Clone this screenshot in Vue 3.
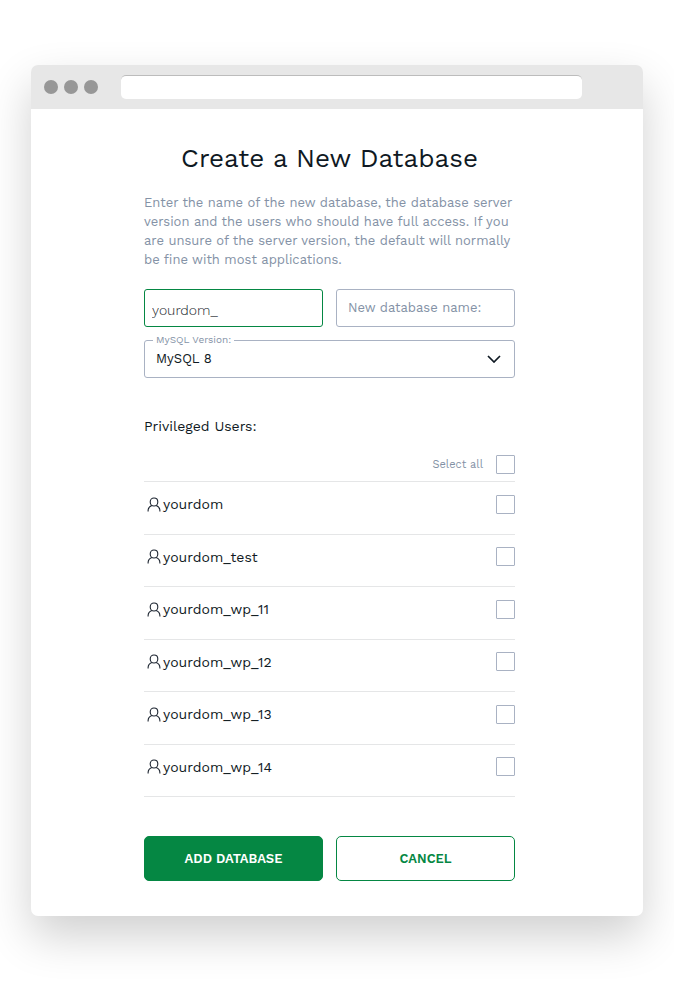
<script setup>
import { ref, computed } from 'vue'

const users = ['yourdom', 'yourdom_test', 'yourdom_wp_11', 'yourdom_wp_12', 'yourdom_wp_13', 'yourdom_wp_14']

const prefix = ref('yourdom_')
const name = ref('')
const version = ref('8')
const selected = ref([])

const allSelected = computed({
    get: () => selected.value.length === users.length,
    set: (value) => {
        selected.value = value ? [...users] : []
    },
})

function reset() {
    name.value = ''
    selected.value = []
}
</script>

<template>
    <main class="window">
        <header class="toolbar">
            <span class="dot"></span>
            <span class="dot"></span>
            <span class="dot"></span>
            <div class="address"></div>
        </header>

        <form class="content" @submit.prevent>
            <h1 class="title">Create a New Database</h1>
            <p class="intro">
                Enter the name of the new database, the database server version and the users who should have
                full access. If you are unsure of the server version, the default will normally be fine with
                most applications.
            </p>

            <div class="pair">
                <input v-model="prefix" class="field prefix" type="text" aria-label="Database prefix" readonly>
                <input v-model="name" class="field" type="text" aria-label="New database name" placeholder="New database name:">
            </div>

            <div class="version">
                <label class="version-label" for="version">MySQL Version:</label>
                <select id="version" v-model="version" class="field select">
                    <option value="8">MySQL 8</option>
                </select>
                <svg class="chevron" viewBox="0 0 14 8" aria-hidden="true">
                    <path d="M1 1l6 6 6-6" />
                </svg>
            </div>

            <h2 class="subtitle">Privileged Users:</h2>
            <div class="select-all">
                <label for="all">Select all</label>
                <input id="all" v-model="allSelected" class="check" type="checkbox">
            </div>

            <ul class="users">
                <li v-for="user in users" :key="user" class="user">
                    <svg class="icon" viewBox="0 0 14 15" aria-hidden="true">
                        <path d="M7 1c2.200 0 3.800 1.700 3.800 3.900S9.200 9 7 9 3.200 7.100 3.200 4.900 4.800 1 7 1z" />
                        <path d="M1.100 14.500v-.7c0-2.600 1.500-4.500 3.800-5.300M12.900 14.500v-.7c0-2.600-1.500-4.500-3.800-5.300" />
                    </svg>
                    <label class="user-name" :for="user">{{ user }}</label>
                    <input :id="user" v-model="selected" class="check" type="checkbox" :value="user">
                </li>
            </ul>

            <div class="pair">
                <button class="button primary" type="submit">ADD DATABASE</button>
                <button class="button" type="button" @click="reset">CANCEL</button>
            </div>
        </form>
    </main>
</template>

<style>
body {
    background: #fff;
}
</style>

<style scoped>
.window {
    margin: 65px 31px;
    overflow: hidden;
    border-radius: 7px;
    background: #fff;
    box-shadow: 0 20px 45px rgba(0, 0, 0, 0.19);
    color: #0f1923;
    font-family: "Work Sans", Inter, sans-serif;
    font-size: 13px;
}

.toolbar {
    display: flex;
    align-items: center;
    gap: 6px;
    height: 44px;
    padding: 0 61px 0 13px;
    background: #e7e7e7;
}

.dot {
    width: 14px;
    height: 14px;
    border-radius: 50%;
    background: #979797;
}

.address {
    flex: 1;
    height: 23px;
    margin-left: 17px;
    border-top: 1px solid #bcbcbc;
    border-radius: 5px;
    background: #fff;
}

.content {
    padding: 33px 128px 35px 113px;
}

.title {
    margin: 0 0 19px;
    font-size: 26px;
    font-weight: 400;
    line-height: 32px;
    text-align: center;
    white-space: nowrap;
}

.intro {
    margin: 0 0 20px;
    color: #8492a6;
    line-height: 19px;
}

.pair {
    display: grid;
    grid-template-columns: 1fr 1fr;
    gap: 13px;
}

.field {
    box-sizing: border-box;
    width: 100%;
    height: 38px;
    padding: 0 11px 2px;
    border: 1px solid #a9b2c3;
    border-radius: 3px;
    outline: none;
    background: #fff;
    color: #0f1923;
    font: inherit;
}

.field::placeholder {
    color: #8492a6;
    opacity: 1;
}

.prefix {
    padding: 3px 7px 0;
    border-color: #058743;
    color: #22282e;
    font-size: 14px;
    font-weight: 300;
}

.version {
    position: relative;
    margin: 13px 0 39px;
}

.version-label {
    position: absolute;
    top: -6px;
    left: 9px;
    padding: 0 3px;
    background: #fff;
    color: #8492a6;
    font-size: 10px;
    line-height: 12px;
}

.select {
    display: block;
    appearance: none;
}

.chevron {
    position: absolute;
    top: 15px;
    right: 14px;
    width: 14px;
    height: 8px;
    fill: none;
    stroke: #0f1923;
    stroke-width: 1.7;
    pointer-events: none;
}

.subtitle {
    margin: 0 0 19px;
    font-size: 14px;
    font-weight: 400;
    line-height: 19px;
}

.select-all {
    display: flex;
    align-items: center;
    justify-content: flex-end;
    gap: 13px;
    padding-bottom: 7px;
    border-bottom: 1px solid #e5e6e7;
    color: #8492a6;
    font-size: 11px;
}

.check {
    box-sizing: border-box;
    width: 19px;
    height: 19px;
    margin: 0;
    border: 1px solid #a9b2c3;
    border-radius: 1px;
    appearance: none;
    background: #fff;
}

.check:checked {
    background: #058743;
    box-shadow: inset 0 0 0 3px #fff;
}

.users {
    display: flex;
    flex-direction: column;
    min-height: 315px;
    margin: 0 0 39px;
    padding: 0;
    list-style: none;
}

.user {
    display: flex;
    flex: 1;
    align-items: center;
    box-sizing: border-box;
    padding: 0 0 7px 3px;
    border-bottom: 1px solid #e5e6e7;
    font-size: 14px;
}

.icon {
    width: 14px;
    height: 15px;
    margin-right: 2px;
    fill: none;
    stroke: #1c2430;
    stroke-width: 1.1;
}

.user-name {
    flex: 1;
}

.button {
    height: 45px;
    border: 1px solid #058743;
    border-radius: 5px;
    background: #fff;
    color: #058743;
    font-family: "Work Sans", Inter, sans-serif;
    font-size: 13px;
    font-weight: 600;
    cursor: pointer;
}

.primary {
    background: #058743;
    color: #fff;
}
</style>
